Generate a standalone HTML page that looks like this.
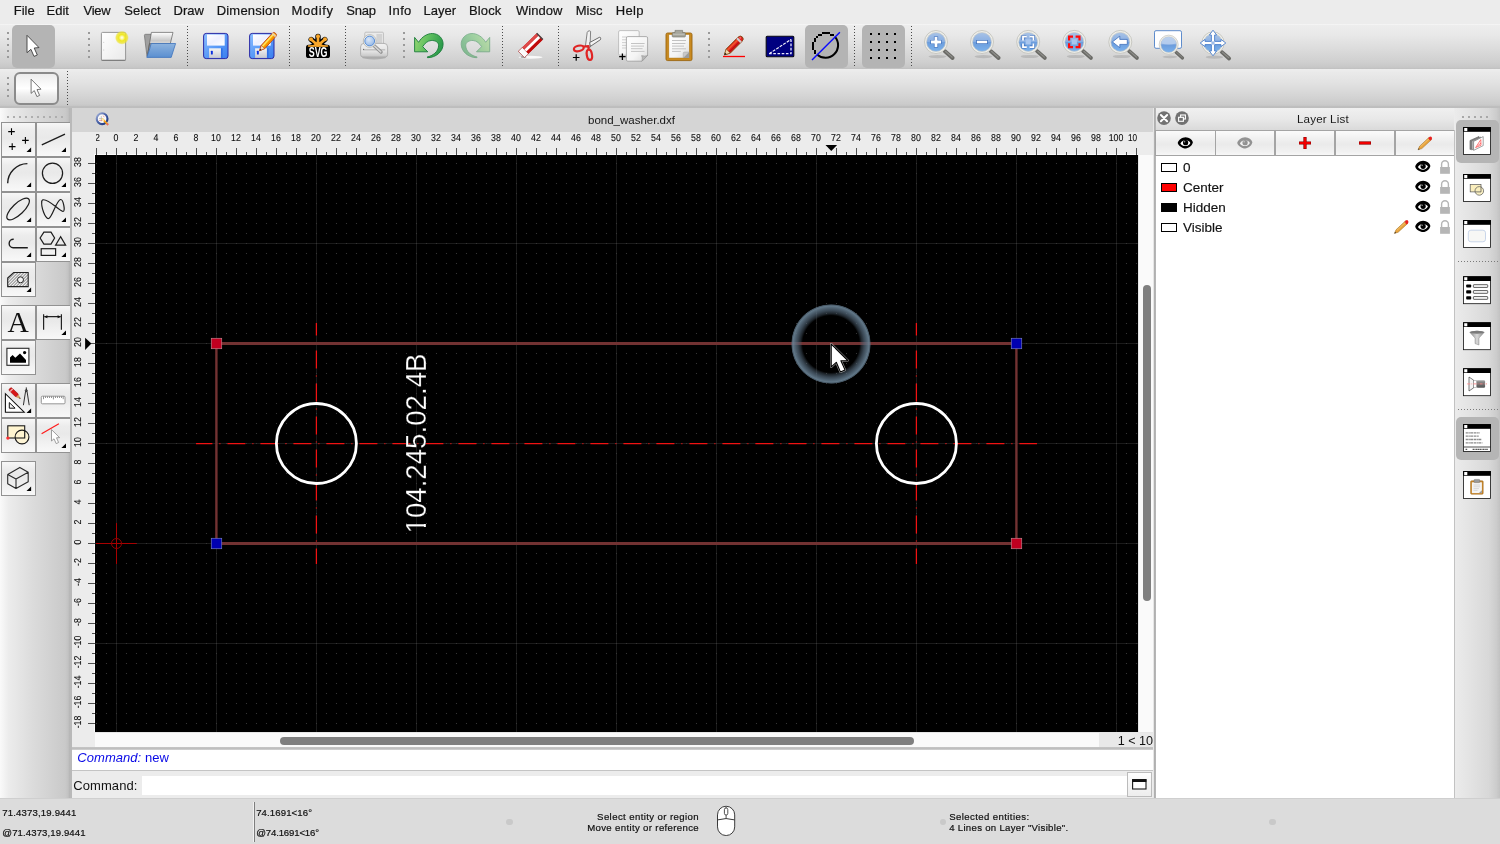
<!DOCTYPE html>
<html><head><meta charset="utf-8"><title>QCAD</title>
<style>
*{margin:0;padding:0;box-sizing:border-box}
html,body{width:1500px;height:844px;overflow:hidden}
body{position:relative;background:#ececec;font-family:"Liberation Sans",sans-serif;color:#1e1e1e;font-size:13px}
#root{position:absolute;left:0;top:0;width:1500px;height:844px;overflow:hidden;will-change:transform}
.abs{position:absolute}
svg{position:absolute;overflow:visible}
#menubar{position:absolute;left:0;top:0;width:1500px;height:24px;background:#ececec}
#menubar span{position:absolute;top:2px;font-size:13px;line-height:17px;color:#141414;white-space:nowrap;-webkit-text-stroke:0.2px #141414}
#tb1{position:absolute;left:0;top:24px;width:1500px;height:45px;background:linear-gradient(#f8f8f8 0,#ededed 3%,#e8e8e8 25%,#dcdcdc 55%,#cfcfcf 85%,#c7c7c7 96%,#c0c0c0 100%)}
#tb2{position:absolute;left:0;top:69px;width:1500px;height:39px;background:linear-gradient(#eeeeee 0,#eaeaea 8%,#e2e2e2 35%,#d6d6d6 65%,#cbcbcb 90%,#c6c6c6 94%,#bebebe 96%,#bdbdbd 100%)}
.sel{position:absolute;background:#b4b4b4;border-radius:5px}
.hsep{position:absolute;width:2px;background-image:linear-gradient(#9a9a9a 2px,transparent 2px);background-size:2px 6px}
.vsep{position:absolute;width:1px;background-image:linear-gradient(#4a4a4a 1px,transparent 1px);background-size:1px 3px}
/* rulers */
.rl{position:absolute;top:132px;width:40px;text-align:center;font-size:10px;line-height:12px;color:#0a0a0a;transform:scaleX(0.88) skewX(0.05deg);-webkit-text-stroke:0.1px #0a0a0a}
.vl{position:absolute;left:58.4px;width:40px;height:12px;margin-top:-6px;text-align:center;font-size:10px;line-height:12px;color:#0a0a0a;transform:rotate(-90deg) scaleX(0.88) skewX(0.05deg);transform-origin:50% 50%;-webkit-text-stroke:0.1px #0a0a0a}
</style></head>
<body>
<div id="root">
<div id="menubar">
<span style="left:13.7px;letter-spacing:0.0px">File</span><span style="left:46.6px;letter-spacing:-0.05px">Edit</span><span style="left:83.4px;letter-spacing:-0.2px">View</span><span style="left:124.2px;letter-spacing:0.05px">Select</span><span style="left:173.6px;letter-spacing:0.0px">Draw</span><span style="left:216.7px;letter-spacing:0.2px">Dimension</span><span style="left:291.5px;letter-spacing:0.65px">Modify</span><span style="left:346.3px;letter-spacing:-0.25px">Snap</span><span style="left:388.6px;letter-spacing:0.35px">Info</span><span style="left:423.6px;letter-spacing:0.0px">Layer</span><span style="left:468.9px;letter-spacing:0.15px">Block</span><span style="left:515.9px;letter-spacing:0.05px">Window</span><span style="left:575.7px;letter-spacing:0.0px">Misc</span><span style="left:615.8px;letter-spacing:0.3px">Help</span>
</div>
<div id="tb1"></div>
<div id="tb2"></div>
<!-- toolbar decorations -->
<div class="hsep" style="left:7px;top:32px;height:26px"></div>
<div class="hsep" style="left:88px;top:32px;height:26px"></div>
<div class="hsep" style="left:403px;top:32px;height:26px"></div>
<div class="hsep" style="left:708px;top:32px;height:26px"></div>
<div class="hsep" style="left:7px;top:77px;height:20px"></div>
<div class="vsep" style="left:187px;top:26px;height:40px"></div>
<div class="vsep" style="left:289px;top:26px;height:40px"></div>
<div class="vsep" style="left:345px;top:26px;height:40px"></div>
<div class="vsep" style="left:502px;top:26px;height:40px"></div>
<div class="vsep" style="left:558px;top:26px;height:40px"></div>
<div class="vsep" style="left:854px;top:26px;height:40px"></div>
<div class="vsep" style="left:911px;top:26px;height:40px"></div>
<div class="vsep" style="left:67px;top:71px;height:35px"></div>
<div class="sel" style="left:12px;top:25px;width:43px;height:43px"></div>
<div class="sel" style="left:805px;top:25px;width:43px;height:43px"></div>
<div class="sel" style="left:862px;top:25px;width:43px;height:43px"></div>
<div class="abs" style="left:14px;top:72px;width:45px;height:33px;border:2px solid #8b8b8b;border-radius:6px;background:linear-gradient(#ececec 0,#f6f6f6 25%,#ffffff 50%,#ebebeb 75%,#e0e0e0 100%)"></div>
<svg width="1500" height="86" viewBox="0 22 1500 86" style="left:0;top:22px">
<!-- arrows -->
<path d="M27 35.3 V52.7 L30.9 49.3 L34 56.4 L37.3 55 L34.2 48 L39 47.6 Z" fill="#fff" stroke="#3c3c3c" stroke-width="0.9" stroke-linejoin="round"/>
<path d="M31.1 79.2 V93.4 L34.3 90.6 L36.9 96.6 L39.6 95.4 L37 89.6 L41 89.2 Z" fill="#fff" stroke="#555" stroke-width="0.8" stroke-linejoin="round"/>
<!-- grid dots -->
<g fill="#000"><path d="M870 33h2v2h-2zM878 33h2v2h-2zM886 33h2v2h-2zM894 33h2v2h-2zM870 41h2v2h-2zM878 41h2v2h-2zM886 41h2v2h-2zM894 41h2v2h-2zM870 49h2v2h-2zM878 49h2v2h-2zM886 49h2v2h-2zM894 49h2v2h-2zM870 57h2v2h-2zM878 57h2v2h-2zM886 57h2v2h-2zM894 57h2v2h-2z"/></g>
<!-- circle with line -->
<path d="M834.8 36.6 A12.6 12.6 0 0 1 817 54.4" fill="none" stroke="#000" stroke-width="2"/>
<path d="M822 32h8v2h-8z M818 34h4v2h-4z M830 34h4v2h-4z M816 36h2v2h-2z M814 38h2v4h-2z M812 42h2v8h-2z M814 50h2v4h-2z" fill="#000" shape-rendering="crispEdges"/>
<path d="M812 59.9 L839.9 32.2" stroke="#0a0aff" stroke-width="1.4"/>
<defs>
<linearGradient id="gPage" x1="0" y1="0" x2="1" y2="1"><stop offset="0" stop-color="#ffffff"/><stop offset="1" stop-color="#e9e9e9"/></linearGradient>
<radialGradient id="gGlow"><stop offset="0" stop-color="#ffffff"/><stop offset="0.22" stop-color="#fbf7a0"/><stop offset="0.45" stop-color="#f0e824"/><stop offset="0.8" stop-color="#eee42a" stop-opacity="0.75"/><stop offset="1" stop-color="#e8e040" stop-opacity="0"/></radialGradient>
<linearGradient id="gFold" x1="0" y1="0" x2="0" y2="1"><stop offset="0" stop-color="#8db3de"/><stop offset="1" stop-color="#5b8fd0"/></linearGradient>
<linearGradient id="gPaper" x1="0" y1="0" x2="0" y2="1"><stop offset="0" stop-color="#ffffff"/><stop offset="0.35" stop-color="#c9c9c9"/><stop offset="0.6" stop-color="#e4e4e4"/><stop offset="1" stop-color="#bdbdbd"/></linearGradient>
<linearGradient id="gDisk" x1="0" y1="0" x2="1" y2="1"><stop offset="0" stop-color="#8fc0ff"/><stop offset="0.5" stop-color="#5b9bf8"/><stop offset="1" stop-color="#3a7eee"/></linearGradient>
<linearGradient id="gLabel" x1="0" y1="0" x2="1" y2="1"><stop offset="0" stop-color="#ffffff"/><stop offset="0.5" stop-color="#eef0ff"/><stop offset="1" stop-color="#ffffff"/></linearGradient>
<linearGradient id="gShut" x1="0" y1="0" x2="0" y2="1"><stop offset="0" stop-color="#f4f4f4"/><stop offset="1" stop-color="#c8c8d0"/></linearGradient>
<linearGradient id="gUndo" x1="0" y1="0" x2="1" y2="0.3"><stop offset="0" stop-color="#9ad872"/><stop offset="0.5" stop-color="#5fbf5f"/><stop offset="1" stop-color="#2e9c4c"/></linearGradient>
<linearGradient id="gPrn" x1="0" y1="0" x2="0" y2="1"><stop offset="0" stop-color="#f2f2f2"/><stop offset="0.6" stop-color="#e2e2e2"/><stop offset="1" stop-color="#c4c4c4"/></linearGradient>
<radialGradient id="gLensS" cx="0.4" cy="0.35" r="0.8"><stop offset="0" stop-color="#dce8f8"/><stop offset="0.6" stop-color="#a9c6ec"/><stop offset="1" stop-color="#7fa8e0"/></radialGradient>
</defs>
<!-- new -->
<rect x="101.4" y="32.4" width="24.2" height="28" rx="1.2" fill="url(#gPage)" stroke="#8c8c8c" stroke-width="0.9"/>
<path d="M101.5 60.3 H125.5" stroke="#6a6a6a" stroke-width="1.1" opacity="0.7"/>
<path d="M103.2 42.4 h1 M103.2 50 h1" stroke="#bbb" stroke-width="0.7"/>
<circle cx="121.9" cy="37.7" r="7" fill="url(#gGlow)"/>
<!-- open -->
<path d="M144.4 35.4 Q144.4 34.3 145.6 34.3 H151.4 L151.2 56.7 H147 Z" fill="#a0a0a0" stroke="#6e6e6e" stroke-width="0.7"/>
<path d="M151.4 32.4 H173 L170.3 43.6 H149.5 L147.4 55.6 Z" fill="url(#gPaper)" stroke="#5e5e5e" stroke-width="0.7" stroke-linejoin="round"/>
<path d="M151.2 43.5 H175.6 L171.2 57.4 H146.8 Q149.6 50 151.2 43.5 Z" fill="url(#gFold)" stroke="#3f74bd" stroke-width="0.8" stroke-linejoin="round"/>
<!-- save -->
<g id="floppy">
<rect x="203.6" y="33.4" width="24.4" height="25.2" rx="2.6" fill="url(#gDisk)" stroke="#2a2aa6" stroke-width="1"/>
<rect x="207" y="34.5" width="17.7" height="11.1" fill="url(#gLabel)"/>
<rect x="209.1" y="48.3" width="11.8" height="9.6" fill="url(#gShut)"/>
<rect x="221" y="48.3" width="1.6" height="9.6" fill="#2f6fe6"/>
<rect x="210.9" y="50.7" width="1.9" height="3.9" rx="0.6" fill="#0a2ee0"/>
</g>
<use href="#floppy" x="46"/>
<!-- pencil on save-as -->
<g transform="translate(259.6 50.7) rotate(-47.6)">
<path d="M0 0 L5 -2.4 H21.6 Q23.6 -2.4 23.6 0 Q23.6 2.4 21.6 2.4 H5 Z" fill="#ffb000" stroke="#b8360e" stroke-width="0.8" stroke-linejoin="round"/>
<path d="M5 -0.9 H21.4" stroke="#ffe36a" stroke-width="1.4"/>
<path d="M5 1.3 H21.4" stroke="#f58a00" stroke-width="1.4"/>
<path d="M0 0 L5 -2.3 V2.3 Z" fill="#f3e3c6" stroke="#b8360e" stroke-width="0.5"/>
<path d="M0 0 L1.9 -0.9 V0.9 Z" fill="#222"/>
<rect x="20.4" y="-2.3" width="2" height="4.6" fill="#e8d8c0" opacity="0.8"/>
</g>
<!-- SVG -->
<g>
<path d="M318 45.5 V36.5 M318 45.5 L311.2 39.5 M318 45.5 L324.8 39.5" stroke="#000" stroke-width="5.4" stroke-linecap="round" fill="none"/>
<path d="M307.6 46.4 Q313 45.8 318 41 Q323 45.8 328.4 46.4 Z" fill="#000" stroke="#000" stroke-width="2"/>
<rect x="306" y="44.8" width="24" height="13.3" rx="2.6" fill="#000"/>
<path d="M318 45.5 V36.5 M318 45.5 L311.2 39.5 M318 45.5 L324.8 39.5" stroke="#f9a72b" stroke-width="2.7" stroke-linecap="round" fill="none"/>
<circle cx="318" cy="36.2" r="2" fill="#f9a72b"/><circle cx="311" cy="39.3" r="2" fill="#f9a72b"/><circle cx="325" cy="39.3" r="2" fill="#f9a72b"/>
<path d="M308.6 46.2 Q313.4 45.6 318 42.3 Q322.6 45.6 327.4 46.2 Z" fill="#f9a72b"/>
<path d="M308.4 46 H327.6" stroke="#f9a72b" stroke-width="1.3" stroke-linecap="round"/>
<text x="318.1" y="57.3" font-family="Liberation Sans, sans-serif" font-weight="bold" font-size="14.2" text-anchor="middle" fill="#fff" textLength="18.8" lengthAdjust="spacingAndGlyphs">SVG</text>
</g>
<!-- print preview -->
<ellipse cx="374" cy="57.4" rx="12" ry="2" fill="#777" opacity="0.4"/>
<rect x="364.8" y="32.2" width="18.6" height="13" rx="1" fill="#eaeaea" stroke="#b4b4b4" stroke-width="0.8"/>
<rect x="376.4" y="34" width="5.6" height="9.4" fill="#d2d2d2"/>
<path d="M360.6 47 Q360.6 43.4 364 43.4 H384 Q387.6 43.4 387.6 47 V54.6 Q387.6 57 385.2 57 H363 Q360.6 57 360.6 54.6 Z" fill="url(#gPrn)" stroke="#a4a4a4" stroke-width="0.8"/>
<path d="M363 49.8 H385.2" stroke="#bcbcbc" stroke-width="1.3"/>
<circle cx="363.6" cy="49.4" r="0.6" fill="#666"/>
<path d="M374.4 46 L381 52" stroke="#8e8e8e" stroke-width="3.4" stroke-linecap="round"/>
<path d="M374.6 46.2 L380.8 51.8" stroke="#d4d4d4" stroke-width="1.6" stroke-linecap="round"/>
<circle cx="369.7" cy="41" r="6.4" fill="#f4f4f0" stroke="#a9a9a4" stroke-width="0.7"/>
<circle cx="369.7" cy="41" r="4.9" fill="url(#gLensS)" stroke="#4f86d2" stroke-width="0.9"/>
<!-- undo / redo -->
<path id="undo" d="M414.6 37.4 L418.6 42.3 C422 36.5 427.5 33.5 432.3 33.5 C438.8 33.6 443.2 38.6 443.1 44.2 C443 51.4 436.2 57.6 427.6 57.7 L427.1 57 C432.5 56 438.4 51.8 438.6 45.8 C438.7 42 435.2 40.3 431.2 40.5 C427.6 40.7 424.6 43.5 422.7 46.7 L427.8 51.8 L414.6 51.8 Z" fill="url(#gUndo)" stroke="#1a7c3a" stroke-width="0.9" stroke-linejoin="round"/>
<g transform="translate(904.3 0) scale(-1 1)" opacity="0.5"><use href="#undo"/></g>
<!-- eraser -->
<ellipse cx="530.6" cy="57.2" rx="12" ry="1.5" fill="#fff" opacity="0.85"/>
<ellipse cx="523.5" cy="57" rx="3" ry="1" fill="#666" opacity="0.6"/>
<g transform="translate(518.3 51.3) rotate(-44.4)">
<rect x="0" y="0" width="26.2" height="8.8" fill="#d01414"/>
<rect x="0" y="0" width="5.6" height="8.8" fill="#fbfbfb" stroke="#a03030" stroke-width="0.5"/>
<rect x="5.6" y="0" width="19.6" height="2.6" fill="#de4a4a"/>
<rect x="5.6" y="3" width="19.6" height="2.9" fill="#ffffff"/>
<rect x="5.6" y="6" width="19.6" height="2.8" fill="#c00a0a"/>
<rect x="25" y="0" width="1.4" height="8.8" fill="#4a4a4a"/>
</g>
<defs>
<linearGradient id="gDoc" x1="0" y1="0" x2="1" y2="1"><stop offset="0" stop-color="#ffffff"/><stop offset="0.6" stop-color="#f4f4f4"/><stop offset="1" stop-color="#d8d8d8"/></linearGradient>
<linearGradient id="gLens" x1="0" y1="0" x2="0" y2="1"><stop offset="0" stop-color="#a9c3e6"/><stop offset="0.48" stop-color="#88aee2"/><stop offset="0.5" stop-color="#6b9cdc"/><stop offset="1" stop-color="#7cb2ec"/></linearGradient>
<linearGradient id="gHandle" x1="0" y1="0" x2="1" y2="0"><stop offset="0" stop-color="#8a8a86"/><stop offset="0.5" stop-color="#5c5c5a"/><stop offset="1" stop-color="#767672"/></linearGradient>
<g id="lens">
<ellipse cx="1.5" cy="14.6" rx="9" ry="1.6" fill="#777" opacity="0.28"/>
<path d="M8.9 9.2 L16.6 16" stroke="#6a6a66" stroke-width="3.9" stroke-linecap="round"/>
<path d="M9.6 9.4 L16.2 15.2" stroke="#8e8e8a" stroke-width="1.2" stroke-linecap="round" stroke-dasharray="0.8 0.8"/>
<circle cx="0" cy="0" r="11.5" fill="#eeeee9" stroke="#b9b9b2" stroke-width="0.7"/>
<circle cx="0" cy="0" r="9.5" fill="url(#gLens)" stroke="#c9c9c2" stroke-width="0.6"/>
</g>
</defs>
<!-- scissors -->
<path d="M585.4 46.4 L587.2 32.4 Q587.8 30.8 589.4 30.8 L590.6 31.4 L590 47.4 Z" fill="#f2f2f2" stroke="#666" stroke-width="0.8" stroke-linejoin="round"/>
<path d="M589.6 42.6 L599.4 37.3 Q600.8 37.2 600.7 38.6 L600.5 39.6 L590.4 46.4 Z" fill="#f4f4f4" stroke="#4a4a4a" stroke-width="0.8" stroke-linejoin="round"/>
<g fill="none" stroke="#e02424" stroke-width="2.2">
<ellipse cx="578.8" cy="48.4" rx="5" ry="2.7" transform="rotate(-14 578.8 48.4)"/>
<ellipse cx="589.4" cy="54.8" rx="2.6" ry="5.2" transform="rotate(-9 589.4 54.8)"/>
<path d="M583.4 46.6 L588.4 46.2 L588.6 50" stroke-width="2.2" stroke-linejoin="round"/>
</g>
<path d="M572.9 57.5 h6.6 M576.2 54.2 v6.6" stroke="#000" stroke-width="1.2" fill="none"/>
<!-- copy -->
<rect x="618.6" y="30.6" width="20.6" height="24.6" rx="1.4" fill="url(#gDoc)" stroke="#b4b4b4" stroke-width="0.8"/>
<path d="M622 37 h5 M622 39.8 h5 M622 42.6 h5 M622 45.4 h5 M622 48 h5" stroke="#cfcfcf" stroke-width="1"/>
<path d="M627.8 36.6 H646.2 Q647.6 36.6 647.6 38 V55.4 L642 61.2 H627.8 Q626.4 61.2 626.4 59.8 V38 Q626.4 36.6 627.8 36.6 Z" fill="url(#gDoc)" stroke="#9a9a9a" stroke-width="0.8"/>
<path d="M642 61.2 Q642.8 57.4 641.6 55.6 Q644.6 56.6 647.6 55.4 Z" fill="#b8b8b8" stroke="#8c8c8c" stroke-width="0.5"/>
<path d="M631 43.5 h13.6 M631 46.1 h13 M631 48.7 h11.6 M631 51.4 h13.6" stroke="#c4c4c4" stroke-width="1"/>
<path d="M619.2 56.7 h6.4 M622.4 53.5 v6.4" stroke="#000" stroke-width="1.3" fill="none"/>
<!-- paste -->
<rect x="666" y="33" width="26" height="27.6" rx="1.6" fill="#c98a20" stroke="#9a6410" stroke-width="0.9"/>
<rect x="668.9" y="34.6" width="20.3" height="23.4" fill="url(#gDoc)" stroke="#a87418" stroke-width="0.4"/>
<path d="M672 40.5 h14 M672 43.5 h13.4 M672 46.1 h12 M672 48.8 h14 M672 51.4 h8.8" stroke="#c2c2c2" stroke-width="1"/>
<path d="M683.2 58 L689.2 52 V58 Z" fill="#9c9c9c"/><path d="M683.2 58 L683.2 53.4 Q683.2 52 684.6 52 H689.2 Z" fill="#c8c8c8" stroke="#999" stroke-width="0.4"/>
<path d="M675 30.4 H682.6 V32.6 H684.6 Q685.4 32.6 685.4 33.4 V36.2 Q685.4 37 684.6 37 H673 Q672.2 37 672.2 36.2 V33.4 Q672.2 32.6 673 32.6 H675 Z" fill="#a6a69c" stroke="#6e6e66" stroke-width="0.6"/>
<path d="M673 34.3 H684.6" stroke="#c8c8c0" stroke-width="0.8"/>
<!-- red pencil -->
<path d="M723 56.5 H745" stroke="#ff0000" stroke-width="1.3"/>
<g transform="translate(724.4 54.9) rotate(-45)">
<path d="M0 0 L5.4 -2.9 H22 Q25.4 -2.9 25.4 0 Q25.4 2.9 22 2.9 H5.4 Z" fill="#e22222" stroke="#7a4a12" stroke-width="0.8" stroke-linejoin="round"/>
<path d="M5.4 -1.2 H19.6" stroke="#f05a2a" stroke-width="1.5"/>
<path d="M5.4 1.4 H19.6" stroke="#c01010" stroke-width="1.5"/>
<path d="M0 0 L5.4 -2.8 V2.8 Z" fill="#f2d8ac" stroke="#7a4a12" stroke-width="0.5"/>
<path d="M0 0 L2.1 -1.1 V1.1 Z" fill="#111"/>
<rect x="19.6" y="-2.8" width="2.1" height="5.6" fill="#cfcfcf"/>
<circle cx="23.2" cy="-0.9" r="1" fill="#ff7a7a" opacity="0.8"/>
</g>
<!-- blue box -->
<rect x="766.2" y="36.2" width="27.6" height="20.6" rx="1" fill="#000080" stroke="#0a0a14" stroke-width="1.1"/>
<path d="M769.2 53.7 L791 39.4" stroke="#fff" stroke-width="1.1" stroke-dasharray="3 1.2" fill="none"/>
<path d="M791 39.4 V53.7 H769.2" stroke="#e8e8ff" stroke-width="1.3" stroke-dasharray="2.6 1.6" fill="none"/>
<!-- zoom icons -->
<use href="#lens" x="936" y="42"/>
<path d="M936 36.4 V47.6 M930.4 42 H941.6" stroke="#3e6fba" stroke-width="4.2" fill="none"/>
<path d="M936 37 V47 M931 42 H941" stroke="#fff" stroke-width="2.8" fill="none"/>
<use href="#lens" x="982" y="42"/>
<path d="M976.2 42 H987.8" stroke="#3e6fba" stroke-width="4" fill="none"/>
<path d="M976.9 42 H987.1" stroke="#fff" stroke-width="2.6" fill="none"/>
<use href="#lens" x="1028.2" y="41.9"/>
<rect x="1025.6" y="39.3" width="5.2" height="5.2" fill="#a9c6ee"/>
<g fill="none" stroke="#3e6fba" stroke-width="3"><path d="M1023 40 V36.7 H1026.4 M1030 36.7 H1033.4 V40 M1033.4 43.8 V47.1 H1030 M1026.4 47.1 H1023 V43.8"/></g>
<g fill="none" stroke="#fff" stroke-width="1.8"><path d="M1023 40.4 V36.7 H1026.8 M1029.6 36.7 H1033.4 V40.4 M1033.4 43.4 V47.1 H1029.6 M1026.8 47.1 H1023 V43.4"/></g>
<use href="#lens" x="1074.3" y="41.9"/>
<rect x="1071.7" y="39.3" width="5.2" height="5.2" fill="#a9c6ee"/>
<g fill="none" stroke="#ff0a0a" stroke-width="2.2"><path d="M1069.1 40.6 V36.7 H1073 M1075.6 36.7 H1079.5 V40.6 M1079.5 43.2 V47.1 H1075.6 M1073 47.1 H1069.1 V43.2"/></g>
<use href="#lens" x="1120.3" y="41.9"/>
<path d="M1112.4 41.9 L1119.8 36.1 V39.4 H1127.3 V44.4 H1119.8 V47.7 Z" fill="#fff" stroke="#3e6fba" stroke-width="0.8" stroke-linejoin="round"/>
<!-- zoom window -->
<rect x="1154.5" y="30.7" width="27" height="17.6" rx="1.5" fill="#fff" stroke="#5e8ccc" stroke-width="1"/>
<g transform="translate(1168.7 44.7) scale(0.83)"><use href="#lens"/><path d="M-9 -1.5 Q0 1.2 9 -1.5 Q7.5 -9.3 0 -9.4 Q-7.5 -9.3 -9 -1.5 Z" fill="#c0d4f0" opacity="0.75"/></g>
<!-- pan -->
<g transform="translate(1213 43) scale(0.97)"><use href="#lens"/></g>
<path d="M1213 30.2 L1216.6 35 H1214.6 V41.4 H1221 V39.4 L1225.8 43 L1221 46.6 V44.6 H1214.6 V51 H1216.6 L1213 55.8 L1209.4 51 H1211.4 V44.6 H1205 V46.6 L1200.2 43 L1205 39.4 V41.4 H1211.4 V35 H1209.4 Z" fill="#fff" stroke="#4d80cc" stroke-width="0.9" stroke-linejoin="round"/>
<rect x="1211.4" y="41.4" width="3.2" height="3.2" fill="#9dbce8"/>

</svg>

<!-- left tool panel -->
<div class="abs" id="leftpanel" style="left:0;top:108px;width:71px;height:690px;background:linear-gradient(90deg,#fafafa 0,#ececec 12%,#dcdcdc 45%,#c9c9c9 92%,#c2c2c2 96%,#b4b4b4 98.5%,#b0b0b0 100%)"></div>
<div class="abs" style="left:7px;top:116px;width:58px;height:2px;background-image:linear-gradient(90deg,#aeaeae 2px,transparent 2px);background-size:6px 2px"></div>
<style>
.tbtn{position:absolute;width:35px;height:35px;border:1px solid #929292;background:linear-gradient(#f7f7f7 0,#ececec 22%,#e9e9e9 45%,#f3f3f3 80%,#f8f8f8 100%)}
</style>
<div class="tbtn" style="left:1px;top:122px"></div><div class="tbtn" style="left:36px;top:122px"></div>
<div class="tbtn" style="left:1px;top:157px"></div><div class="tbtn" style="left:36px;top:157px"></div>
<div class="tbtn" style="left:1px;top:192px"></div><div class="tbtn" style="left:36px;top:192px"></div>
<div class="tbtn" style="left:1px;top:227px"></div><div class="tbtn" style="left:36px;top:227px"></div>
<div class="tbtn" style="left:1px;top:262px"></div>
<div class="tbtn" style="left:1px;top:305px"></div><div class="tbtn" style="left:36px;top:305px"></div>
<div class="tbtn" style="left:1px;top:340px"></div>
<div class="tbtn" style="left:1px;top:383px"></div><div class="tbtn" style="left:36px;top:383px"></div>
<div class="tbtn" style="left:1px;top:418px"></div><div class="tbtn" style="left:36px;top:418px"></div>
<div class="tbtn" style="left:1px;top:461px"></div>
<svg width="72" height="420" viewBox="0 108 72 420" style="left:0;top:108px">
<defs><path id="tri" d="M4.6 0 L4.6 4.5 L0 4.5 Z" fill="#000"/></defs>
<g fill="#000">
<use href="#tri" x="26.5" y="147.5"/><use href="#tri" x="61.4" y="147.5"/>
<use href="#tri" x="26.5" y="182.5"/><use href="#tri" x="61.4" y="182.5"/>
<use href="#tri" x="26.5" y="217.5"/><use href="#tri" x="61.4" y="217.5"/>
<use href="#tri" x="26.5" y="252.5"/><use href="#tri" x="61.4" y="252.5"/>
<use href="#tri" x="26.5" y="287.5"/>
<use href="#tri" x="61.4" y="330.5"/>
<use href="#tri" x="26.5" y="408.5"/>
<use href="#tri" x="61.4" y="443.5"/>
<use href="#tri" x="26.5" y="486.5"/>
</g>
<g fill="none" stroke="#1c1c1c" stroke-width="1.25" stroke-linecap="butt">
<!-- points -->
<path d="M8.2 131.6h6.6M11.5 128.3v6.6 M22.1 140.4h6.6M25.4 137.1v6.6 M8.9 146.6h6.6M12.2 143.3v6.6" stroke-width="1.1" stroke="#000"/>
<!-- line -->
<path d="M41.8 144.8 L65 134.1" stroke-width="1.3"/>
<!-- arc -->
<path d="M7.7 183.3 A19.8 19.8 0 0 1 27.4 163.6" stroke-width="1.4"/>
<!-- circle -->
<circle cx="52.5" cy="173.3" r="10.1"/>
<!-- ellipse -->
<ellipse cx="18.1" cy="209" rx="14.6" ry="5.6" transform="rotate(-43.5 18.1 209)"/>
<!-- spline -->
<path d="M41.8 201.2 C40.9 207.2 45.2 219.1 48.6 218.5 C52.1 217.9 56.3 200.4 60.6 199.5 C63.2 199.1 65.7 211.5 63.1 211.5 C59.7 211.5 47.8 197.8 42.7 199.9 C41.8 200.4 41.8 201.2 41.8 201.2 Z" stroke-width="1.2"/>
<!-- polyline hook -->
<path d="M13.7 239.2 A4.3 4.3 0 0 0 13.2 247.8 L27.8 247.8" stroke-width="1.4"/>
<!-- shapes -->
<path d="M40.1 238 L43.9 232.1 L51 232.1 L54.6 238 L51 244.1 L43.9 244.1 Z" stroke-width="1.2"/>
<path d="M60.6 236.7 L55.6 245.2 L65.6 245.2 Z" stroke-width="1.2"/>
<rect x="41.2" y="248.7" width="14.4" height="6.7" stroke-width="1.2"/>
</g>
<!-- hatch -->
<defs><clipPath id="hclip"><path d="M7.7 278 L13.7 272.5 L28.2 272.5 L28.2 286.6 L7.7 286.6 Z M23.5 279.8 A3 3 0 1 0 17.5 279.8 A3 3 0 1 0 23.5 279.8 Z" clip-rule="evenodd"/></clipPath></defs>
<g clip-path="url(#hclip)" stroke="#3a3a3a" stroke-width="0.65">
<path d="M-8.4 290 L11.6 270 M-5.4 290 L14.6 270 M-2.4 290 L17.6 270 M0.6 290 L20.6 270 M3.6 290 L23.6 270 M6.6 290 L26.6 270 M9.6 290 L29.6 270 M12.6 290 L32.6 270 M15.6 290 L35.6 270 M18.6 290 L38.6 270 M21.6 290 L41.6 270 M24.6 290 L44.6 270"/>
</g>
<path d="M7.7 278 L13.7 272.5 L28.2 272.5 L28.2 286.6 L7.7 286.6 Z" fill="none" stroke="#222" stroke-width="1.1"/>
<circle cx="20.5" cy="279.8" r="3" fill="#f2f2f2" stroke="#222" stroke-width="1"/>
<!-- A -->
<text x="18.2" y="331.7" font-family="Liberation Serif, serif" font-size="29.5" text-anchor="middle" fill="#111">A</text>
<!-- dimension -->
<g fill="none" stroke="#222" stroke-width="1.2"><path d="M43.6 314.2 V329.8 M61.4 314.2 V329.8 M44.5 316.7 H60.5" /></g>
<path d="M44 316.7 l3.4 -1.5 v3 Z M61 316.7 l-3.4 -1.5 v3 Z" fill="#111"/>
<!-- image -->
<rect x="6.9" y="348.3" width="22" height="17" fill="#fff" stroke="#2a2a2a" stroke-width="1.1"/>
<path d="M10 362.7 V357.4 L12.6 355 L15.3 357.7 L20 353.6 L26 360 V362.7 Z" fill="#000"/>
<circle cx="24.6" cy="352.6" r="1.6" fill="#000"/>
<!-- measuring / drafting -->
<path d="M5.4 393.7 V412.2 H24.2 Z" fill="#fff" stroke="#111" stroke-width="1.1"/>
<path d="M9.3 402.6 V408.2 H15.1 Z" fill="#f4f4f4" stroke="#111" stroke-width="1"/>
<g transform="translate(9.8 388.6) rotate(43.5)"><rect x="0" y="-1.9" width="10.5" height="3.8" rx="1.2" fill="#d81818" stroke="#901010" stroke-width="0.5"/><rect x="1.6" y="-1.9" width="1.3" height="3.8" fill="#f0b0b0"/><path d="M10.5 -1.9 L15 0 L10.5 1.9 Z" fill="#d9a060"/><path d="M13.3 -0.7 L15 0 L13.3 0.7 Z" fill="#333"/></g>
<g fill="none" stroke="#1a1a1a" stroke-width="0.9"><path d="M26.3 387.4 V391 M25.6 391.2 L23.4 405.2 M27 391.2 L29.2 405.2"/><circle cx="26.3" cy="390.6" r="1"/></g>
<!-- ruler -->
<rect x="41.3" y="396.2" width="23.7" height="7.6" rx="1" fill="#fff" stroke="#8c8c8c" stroke-width="0.9"/>
<path d="M43.5 396.4v2.8M45.5 396.4v1.6M47.5 396.4v1.6M49.5 396.4v1.6M51.5 396.4v1.6M53.4 396.4v3M55.5 396.4v1.6M57.5 396.4v1.6M59.5 396.4v1.6M61.5 396.4v1.6M63.2 396.4v2.8" stroke="#666" stroke-width="0.7" fill="none"/>
<!-- block -->
<rect x="7.8" y="425.8" width="16.9" height="12.2" fill="#fff5d0" stroke="#1a1a1a" stroke-width="1.1"/>
<circle cx="22" cy="437" r="6.9" fill="#fff5d0" fill-opacity="0.85" stroke="#1a1a1a" stroke-width="1.1"/>
<path d="M15.2 438 H24.7 V430.9" fill="none" stroke="#1a1a1a" stroke-width="1.1"/>
<circle cx="7.9" cy="438.1" r="1.7" fill="#ff3030"/>
<!-- select -->
<path d="M41.6 433.8 L58.9 423.7" stroke="#ff1a1a" stroke-width="1.2" fill="none"/>
<path d="M51.5 429.6 V441 L54 438.8 L56.2 443.6 L58.6 442.5 L56.5 437.8 L59.6 437.6 Z" fill="#fff" stroke="#888" stroke-width="0.8" stroke-linejoin="round"/>
<!-- cube -->
<g fill="none" stroke="#2a2a2a" stroke-width="1.1" stroke-linejoin="round"><path d="M7.7 474.4 L19.8 467.4 L28.2 472.3 L16 479.1 Z M7.7 474.4 V483.7 L16 488.5 L28.2 481.7 V472.3 M16 479.1 V488.5"/></g>
</svg>
<!-- document area -->
<div class="abs" style="left:70px;top:108px;width:2px;height:690px;background:#b9b9b9"></div>
<div class="abs" id="tabbar" style="left:72px;top:108px;width:1081px;height:24px;background:#d5d5d5"></div>
<div class="abs" style="left:588px;top:113px;font-size:11.5px;line-height:14px;color:#161616;white-space:nowrap" id="tabtitle">bond_washer.dxf</div>
<div class="abs" id="ruler-bg" style="left:72px;top:132px;width:1081px;height:617px;background:#ececec"></div>
<div class="abs" id="toplabels" style="left:96.4px;top:0;width:1041.6px;height:155px;overflow:hidden"><div class="abs" style="left:-97px;top:0"><span class="rl" style="left:76.5px">-2</span><span class="rl" style="left:96.5px">0</span><span class="rl" style="left:116.5px">2</span><span class="rl" style="left:136.5px">4</span><span class="rl" style="left:156.5px">6</span><span class="rl" style="left:176.5px">8</span><span class="rl" style="left:196.5px">10</span><span class="rl" style="left:216.5px">12</span><span class="rl" style="left:236.5px">14</span><span class="rl" style="left:256.5px">16</span><span class="rl" style="left:276.5px">18</span><span class="rl" style="left:296.5px">20</span><span class="rl" style="left:316.5px">22</span><span class="rl" style="left:336.5px">24</span><span class="rl" style="left:356.5px">26</span><span class="rl" style="left:376.5px">28</span><span class="rl" style="left:396.5px">30</span><span class="rl" style="left:416.5px">32</span><span class="rl" style="left:436.5px">34</span><span class="rl" style="left:456.5px">36</span><span class="rl" style="left:476.5px">38</span><span class="rl" style="left:496.5px">40</span><span class="rl" style="left:516.5px">42</span><span class="rl" style="left:536.5px">44</span><span class="rl" style="left:556.5px">46</span><span class="rl" style="left:576.5px">48</span><span class="rl" style="left:596.5px">50</span><span class="rl" style="left:616.5px">52</span><span class="rl" style="left:636.5px">54</span><span class="rl" style="left:656.5px">56</span><span class="rl" style="left:676.5px">58</span><span class="rl" style="left:696.5px">60</span><span class="rl" style="left:716.5px">62</span><span class="rl" style="left:736.5px">64</span><span class="rl" style="left:756.5px">66</span><span class="rl" style="left:776.5px">68</span><span class="rl" style="left:796.5px">70</span><span class="rl" style="left:816.5px">72</span><span class="rl" style="left:836.5px">74</span><span class="rl" style="left:856.5px">76</span><span class="rl" style="left:876.5px">78</span><span class="rl" style="left:896.5px">80</span><span class="rl" style="left:916.5px">82</span><span class="rl" style="left:936.5px">84</span><span class="rl" style="left:956.5px">86</span><span class="rl" style="left:976.5px">88</span><span class="rl" style="left:996.5px">90</span><span class="rl" style="left:1016.5px">92</span><span class="rl" style="left:1036.5px">94</span><span class="rl" style="left:1056.5px">96</span><span class="rl" style="left:1076.5px">98</span><span class="rl" style="left:1096.5px">100</span><span class="rl" id="lastlabel" style="left:1129px;width:auto;text-align:left;transform-origin:0 50%;transform:scaleX(0.82) skewX(0.05deg)">10</span></div></div>
<div class="abs" id="leftlabels" style="left:0;top:155px;width:96px;height:577px;overflow:hidden"><div class="abs" style="left:0;top:-155px"><span class="vl" style="top:162.4px">38</span><span class="vl" style="top:182.4px">36</span><span class="vl" style="top:202.4px">34</span><span class="vl" style="top:222.4px">32</span><span class="vl" style="top:242.4px">30</span><span class="vl" style="top:262.4px">28</span><span class="vl" style="top:282.4px">26</span><span class="vl" style="top:302.4px">24</span><span class="vl" style="top:322.4px">22</span><span class="vl" style="top:342.4px">20</span><span class="vl" style="top:362.4px">18</span><span class="vl" style="top:382.4px">16</span><span class="vl" style="top:402.4px">14</span><span class="vl" style="top:422.4px">12</span><span class="vl" style="top:442.4px">10</span><span class="vl" style="top:462.4px">8</span><span class="vl" style="top:482.4px">6</span><span class="vl" style="top:502.4px">4</span><span class="vl" style="top:522.4px">2</span><span class="vl" style="top:542.4px">0</span><span class="vl" style="top:562.4px">-2</span><span class="vl" style="top:582.4px">-4</span><span class="vl" style="top:602.4px">-6</span><span class="vl" style="top:622.4px">-8</span><span class="vl" style="top:642.4px">-10</span><span class="vl" style="top:662.4px">-12</span><span class="vl" style="top:682.4px">-14</span><span class="vl" style="top:702.4px">-16</span><span class="vl" style="top:722.4px">-18</span></div></div>
<svg width="20" height="20" viewBox="92 109 20 20" style="left:92px;top:109px">
<defs><linearGradient id="gQ" x1="0" y1="0" x2="1" y2="1"><stop offset="0" stop-color="#a9b7dc"/><stop offset="0.45" stop-color="#4a63a8"/><stop offset="1" stop-color="#16307a"/></linearGradient></defs>
<circle cx="102.1" cy="118.7" r="4.4" fill="#fafafa"/>
<path d="M99 118.4 h4 M101.3 116 v5.4" stroke="#999" stroke-width="0.5"/><path d="M99 120.4 h3 M103.2 115.6 l1 1.6" stroke="#e05050" stroke-width="0.5"/>
<circle cx="102.1" cy="118.7" r="5.4" fill="none" stroke="url(#gQ)" stroke-width="2.1"/>
<path d="M102.6 119.2 L107.4 124.2" stroke="#f6a21a" stroke-width="1.9" stroke-linecap="round"/>
<path d="M102.4 119 L103.6 120.2" stroke="#fff0b0" stroke-width="1.4" stroke-linecap="round"/>
<circle cx="107.5" cy="124.3" r="1.1" fill="#e86868"/>
</svg>
<div class="abs" style="left:94px;top:154px;width:1044px;height:1px;background:#fbfbfb"></div>
<div class="abs" style="left:94px;top:154px;width:1px;height:578px;background:#fbfbfb"></div>
<!-- ticks -->
<div class="abs" style="left:96px;top:148px;width:1042px;height:7px;background-image:linear-gradient(90deg,#505050 1px,transparent 1px);background-size:20px 7px"></div>
<div class="abs" style="left:106px;top:152px;width:1032px;height:3px;background-image:linear-gradient(90deg,#505050 1px,transparent 1px);background-size:20px 3px"></div>
<div class="abs" style="left:88px;top:163px;width:7px;height:569px;background-image:linear-gradient(180deg,#505050 1px,transparent 1px);background-size:7px 20px"></div>
<div class="abs" style="left:92px;top:173px;width:3px;height:559px;background-image:linear-gradient(180deg,#505050 1px,transparent 1px);background-size:3px 20px"></div>
<svg width="14" height="8" viewBox="825 144 14 8" style="left:825px;top:144px"><path d="M825.5 145 H837.1 L831.3 151.1 Z" fill="#000"/></svg>
<svg width="8" height="14" viewBox="84 337 8 14" style="left:84px;top:337px"><path d="M85.1 337.8 V349.9 L91.4 343.6 Z" fill="#000"/></svg>
<!-- canvas -->
<div class="abs" id="canvas" style="left:95px;top:155px;width:1043px;height:577px;background:#000;overflow:hidden">
<!-- major grid -->
<div class="abs" style="left:21px;top:0;width:1022px;height:577px;background-image:linear-gradient(90deg,#1b1b1b 1px,transparent 1px);background-size:100px 577px"></div>
<div class="abs" style="left:0;top:88px;width:1043px;height:489px;background-image:linear-gradient(180deg,#1b1b1b 1px,transparent 1px);background-size:1043px 100px"></div>
<div class="abs" style="left:1px;top:8px;width:1042px;height:569px;background-image:linear-gradient(90deg,#363636 1px,transparent 1px);background-size:10px 10px;-webkit-mask-image:linear-gradient(180deg,#000 1px,transparent 1px);-webkit-mask-size:10px 10px;mask-image:linear-gradient(180deg,#000 1px,transparent 1px);mask-size:10px 10px"></div>
<svg width="1043" height="577" viewBox="95 155 1043 577" style="left:0;top:0">
<defs>
<radialGradient id="halo" cx="0.5" cy="0.5" r="0.5">
<stop offset="0" stop-color="#4a5c6c" stop-opacity="0"/>
<stop offset="0.71" stop-color="#4a5c6c" stop-opacity="0"/>
<stop offset="0.765" stop-color="#4c5e6e" stop-opacity="0.42"/>
<stop offset="0.83" stop-color="#54687a" stop-opacity="0.68"/>
<stop offset="0.90" stop-color="#5e7486" stop-opacity="0.85"/>
<stop offset="0.95" stop-color="#6a8294" stop-opacity="0.92"/>
<stop offset="0.982" stop-color="#5c7284" stop-opacity="0.7"/>
<stop offset="1" stop-color="#506476" stop-opacity="0"/>
</radialGradient>
</defs>
<!-- center lines -->
<g stroke="#f01212" stroke-width="1.25" fill="none" stroke-dasharray="18 7 1 7">
<line x1="196" y1="443.5" x2="1037" y2="443.5" stroke-dashoffset="1.6"/>
<line x1="316.4" y1="323" x2="316.4" y2="564" stroke-dashoffset="5.5"/>
<line x1="916.4" y1="323" x2="916.4" y2="564" stroke-dashoffset="5.5"/>
</g>
<!-- selected rectangle -->
<g stroke="#723232" fill="none">
<line x1="216" y1="343.5" x2="1016" y2="343.5" stroke-width="3"/>
<line x1="216" y1="543.5" x2="1016" y2="543.5" stroke-width="3"/>
<line x1="216.4" y1="343" x2="216.4" y2="544" stroke-width="2.4"/>
<line x1="1016.4" y1="343" x2="1016.4" y2="544" stroke-width="2.4"/>
</g>
<!-- circles -->
<circle cx="316.4" cy="443.5" r="40" fill="none" stroke="#fff" stroke-width="2.8"/>
<circle cx="916.4" cy="443.5" r="40" fill="none" stroke="#fff" stroke-width="2.8"/>
<!-- text -->
<text transform="translate(426.2,533.5) rotate(-90)" font-family="Liberation Sans, sans-serif" font-size="30" fill="#fff" stroke="#000" stroke-width="0.3" textLength="180" lengthAdjust="spacingAndGlyphs">104.245.02.4B</text>
<path d="M422.4 518.4 H426.8 V523.9 H422.4 Z M422.4 526.9 H426.8 V532.2 H422.4 Z" fill="#000"/>
<rect x="426" y="523" width="1" height="1" fill="#363636"/>
<!-- handles -->
<rect x="211.25" y="338.25" width="10.5" height="10.5" fill="#c00020" stroke="#c8909c" stroke-width="0.6"/>
<rect x="1011.25" y="538.25" width="10.5" height="10.5" fill="#c00020" stroke="#c8909c" stroke-width="0.6"/>
<rect x="1011.25" y="338.25" width="10.5" height="10.5" fill="#0000b0" stroke="#8088c8" stroke-width="0.6"/>
<rect x="211.25" y="538.25" width="10.5" height="10.5" fill="#0000b0" stroke="#8088c8" stroke-width="0.6"/>
<!-- origin cross -->
<g stroke="#a80000" stroke-width="1" fill="none"><line x1="96" y1="543.5" x2="136.5" y2="543.5"/><line x1="116.5" y1="523" x2="116.5" y2="564"/><circle cx="116.5" cy="543.5" r="5" stroke="#900000"/></g>
<!-- halo + cursor -->
<circle cx="831" cy="344" r="40" fill="url(#halo)"/>
<g transform="translate(831.2,344.1)">
<path d="M0 0 L0 22.8 L5.1 18.2 L9.2 27.8 L13.8 25.8 L9.7 16.6 L16.6 16.4 Z" fill="#fff" stroke="#fff" stroke-width="2.2" stroke-linejoin="round" opacity="0.6"/>
<path d="M0 0 L0 22.8 L5.1 18.2 L9.2 27.8 L13.8 25.8 L9.7 16.6 L16.6 16.4 Z" fill="#fff" stroke="#000" stroke-width="1.1" stroke-linejoin="round"/>
</g>

</svg>
</div>
<!-- scrollbars -->
<div class="abs" style="left:1138px;top:155px;width:15px;height:577px;background:#fafafa;border-left:1px solid #e6e6e6"></div>
<div class="abs" style="left:1143px;top:285px;width:8px;height:316px;border-radius:4px;background:#7f7f7f"></div>
<div class="abs" style="left:95px;top:732px;width:1058px;height:17px;background:#fafafa;border-top:1px solid #e6e6e6"></div>
<div class="abs" style="left:280px;top:737px;width:634px;height:8px;border-radius:4px;background:#7f7f7f"></div>
<div class="abs" style="left:1099px;top:733px;width:54px;height:15px;background:#e9e9e9"></div>
<div class="abs" style="left:1053px;width:100px;text-align:right;top:733.8px;font-size:12.6px;line-height:15px;color:#111;white-space:nowrap">1 &lt; 10</div>
<!-- layer list panel -->
<div class="abs" style="left:1153px;top:108px;width:3px;height:690px;background:linear-gradient(90deg,#e6e6e6 0,#e6e6e6 33%,#aeaeae 34%,#b8b8b8 100%)"></div>
<div class="abs" style="left:1156px;top:108px;width:298px;height:22px;background:linear-gradient(#f0f0f0 0,#e8e8e8 50%,#dadada 100%)"></div>
<div class="abs" style="left:1297px;top:111px;font-size:11.6px;line-height:15px;color:#1a1a1a;white-space:nowrap;letter-spacing:0.15px" id="lltitle">Layer List</div>
<svg width="40" height="22" viewBox="1156 108 40 22" style="left:1156px;top:108px">
<circle cx="1164" cy="118.1" r="6.8" fill="#727272"/><path d="M1160.9 115 L1167.1 121.2 M1167.1 115 L1160.9 121.2" stroke="#fff" stroke-width="2" stroke-linecap="round"/>
<circle cx="1182" cy="118.1" r="6.8" fill="#727272"/>
<rect x="1180.6" y="115" width="4.8" height="4" fill="none" stroke="#fff" stroke-width="1.1"/><rect x="1178.6" y="117.3" width="4.8" height="4" fill="#727272" stroke="#fff" stroke-width="1.1"/>
</svg>
<style>
.lbtn{position:absolute;top:130px;height:26px;border:1px solid #a8a8a8;background:linear-gradient(#fafafa 0,#f0f0f0 30%,#e9e9e9 55%,#f1f1f1 85%,#f6f6f6 100%)}
.lbtn2{position:absolute;top:130.8px;height:24.4px;background:linear-gradient(#fbfbfb 0,#f1f1f1 30%,#eaeaea 55%,#f1f1f1 85%,#f7f7f7 100%)}
.lrow{position:absolute;left:1183px;font-size:13.5px;line-height:18px;color:#111;white-space:nowrap;-webkit-text-stroke:0.15px #111;margin-top:0.5px}
.sw{position:absolute;left:1161px;width:16px;height:9px;border:1px solid #000}
</style>
<div class="abs" style="left:1155px;top:129.6px;width:300px;height:26.8px;background:#a4a4a4"></div>
<div class="lbtn2" style="left:1156.2px;width:58.4px"></div>
<div class="lbtn2" style="left:1216.0px;width:58.4px"></div>
<div class="lbtn2" style="left:1275.8px;width:58.5px"></div>
<div class="lbtn2" style="left:1335.7px;width:58.5px"></div>
<div class="lbtn2" style="left:1395.6px;width:58.4px"></div>
<div class="abs" style="left:1156px;top:156px;width:298px;height:642px;background:#fff"></div>
<div class="abs" style="left:1454px;top:130px;width:1px;height:668px;background:#c2c2c2"></div>
<div class="sw" style="top:163px;background:#fff"></div><div class="lrow" style="top:158px">0</div>
<div class="sw" style="top:183px;background:#f00"></div><div class="lrow" style="top:178px">Center</div>
<div class="sw" style="top:203px;background:#000"></div><div class="lrow" style="top:198px">Hidden</div>
<div class="sw" style="top:223px;background:#fff"></div><div class="lrow" style="top:218px">Visible</div>
<svg width="300" height="130" viewBox="1155 130 300 130" style="left:1155px;top:130px">
<defs>
<g id="eye">
<path d="M-7.6 0.2 C-6.6 -3.4 -3.4 -5.6 0.3 -5.7 C4 -5.6 6.8 -3.5 7.6 -0.6 C6.8 3 3.6 5.4 0.4 5.5 C-1.2 5.6 -1.9 5.1 -2.9 4.8 C-5.2 4 -7 2.3 -7.6 0.2 Z"/>
<path d="M-4.9 0.5 C-3.8 -1.6 -1.8 -2.6 0.2 -2.6 C2.4 -2.6 4.2 -1.6 5.1 0 C4.2 1.9 2.3 3.2 0.2 3.2 C-1.9 3.2 -3.8 2.2 -4.9 0.5 Z" fill="#fff"/>
<circle cx="0.3" cy="-0.2" r="2.6"/>
<circle cx="-0.7" cy="-1.2" r="0.75" fill="#999"/>
</g>
<g id="lock"><rect x="-4.9" y="0.6" width="9.8" height="6.8" fill="#b6b6b6"/><path d="M-3.4 1 V-2.2 A3.4 3.5 0 0 1 3.4 -2.2 V1" fill="none" stroke="#b6b6b6" stroke-width="1.4"/></g>
<g id="pencil"><path d="M0 0 L1.6 -3.6 L11.2 -12.6 L13.6 -10.2 L3.8 -1.2 Z" fill="#e8a33c" stroke="#9a6a1e" stroke-width="0.5"/><path d="M10 -11.5 L11.5 -12.9 Q12.8 -13.8 13.6 -12.7 Q14.6 -11.5 13.6 -10.2 L12.3 -9 Z" fill="#e82020"/><path d="M0 0 L0.7 -1.6 L1.7 -0.5 Z" fill="#333"/><path d="M2.4 -3 L11 -11" stroke="#f6cf80" stroke-width="0.7" fill="none"/></g>
</defs>
<use href="#eye" x="1185.3" y="142.9" fill="#000"/>
<g opacity="0.38"><use href="#eye" x="1244.8" y="142.9" fill="#000"/></g>
<path d="M1305 137 V149 M1299 143 H1311" stroke="#8a0000" stroke-width="3.2" fill="none"/>
<path d="M1305 137.5 V148.5 M1299.5 143 H1310.5" stroke="#f00000" stroke-width="2.1" fill="none"/>
<path d="M1359 143 H1371" stroke="#8a0000" stroke-width="3.2" fill="none"/>
<path d="M1359.5 143 H1370.5" stroke="#f00000" stroke-width="2.1" fill="none"/>
<use href="#pencil" x="1418" y="149.8"/>
<use href="#eye" x="1422.8" y="166.5"/><use href="#eye" x="1422.8" y="186.5"/><use href="#eye" x="1422.8" y="206.5"/><use href="#eye" x="1422.8" y="226.5"/>
<use href="#lock" x="1445" y="166.4"/><use href="#lock" x="1445" y="186.4"/><use href="#lock" x="1445" y="206.4"/><use href="#lock" x="1445" y="226.4"/>
<use href="#pencil" x="1394.4" y="233.4"/>
</svg>
<!-- right toolbar -->
<div class="abs" style="left:1455px;top:108px;width:45px;height:690px;background:linear-gradient(90deg,#ebebeb 0,#e4e4e4 30%,#d8d8d8 75%,#cccccc 92%,#c2c2c2 100%)"></div>
<div class="abs" style="left:1462px;top:116px;width:26px;height:2px;background-image:linear-gradient(90deg,#a8a8a8 2px,transparent 2px);background-size:6px 2px"></div>
<div class="abs" style="left:1456px;top:120px;width:43px;height:43px;border-radius:5px;background:#b5b5b5"></div>
<div class="abs" style="left:1456px;top:417px;width:43px;height:43px;border-radius:5px;background:#b5b5b5"></div>
<div class="abs" style="left:1458px;top:261px;width:42px;height:1px;background-image:linear-gradient(90deg,#7a7a7a 1px,transparent 1px);background-size:3px 1px"></div>
<div class="abs" style="left:1458px;top:409px;width:42px;height:1px;background-image:linear-gradient(90deg,#7a7a7a 1px,transparent 1px);background-size:3px 1px"></div>
<svg width="45" height="420" viewBox="1455 108 45 420" style="left:1455px;top:108px">
<defs>
<g id="wfr"><rect x="1463.5" y="0.5" width="27" height="27" fill="#fff" stroke="#111" stroke-width="0.8"/><rect x="1463.1" y="0.1" width="27.8" height="4.7" fill="#000"/><rect x="1464.2" y="1" width="3.1" height="3.1" fill="#fff"/></g>
</defs>
<use href="#wfr" y="127"/><use href="#wfr" y="174"/><use href="#wfr" y="220"/><use href="#wfr" y="276.2"/><use href="#wfr" y="322.2"/><use href="#wfr" y="368.2"/><use href="#wfr" y="424"/><use href="#wfr" y="471"/>
<!-- 1 layers -->
<g stroke-width="0.6" stroke-linejoin="round">
<path d="M1470 140.5 L1479 136.5 V145.5 L1470 149.5 Z" fill="#8a8a8a" stroke="#555"/>
<path d="M1471.6 141 L1480.6 137 V146 L1471.6 150 Z" fill="#b5b5b5" stroke="#666"/>
<path d="M1473.6 141.4 L1483.2 136.6 V145.6 L1473.6 150.4 Z" fill="#fff" stroke="#666"/>
<path d="M1475.6 147.6 L1480.8 139.6 L1481 145.2 Z M1477.4 146 L1481 143" fill="none" stroke="#ff4040" stroke-width="0.7"/>
</g>
<!-- 2 block -->
<rect x="1470.2" y="184.5" width="10.8" height="7.4" fill="#faeebc" stroke="#555" stroke-width="0.7"/>
<circle cx="1479.3" cy="190.9" r="4.3" fill="#faeebc" fill-opacity="0.9" stroke="#555" stroke-width="0.7"/>
<path d="M1475.2 191.9 H1481 V186.8" fill="none" stroke="#555" stroke-width="0.7"/>
<!-- 3 rounded rect -->
<rect x="1468.3" y="230.2" width="17.2" height="11.6" rx="2.6" fill="#f7f7f5" stroke="#c3d1e8" stroke-width="0.9"/>
<!-- 4 list -->
<g fill="#000"><rect x="1466.2" y="284.4" width="5" height="3.2" rx="0.8"/><rect x="1466.2" y="290.3" width="5" height="3.2" rx="0.8"/><rect x="1466.2" y="296.3" width="5" height="3.2" rx="0.8"/></g>
<g fill="#fff" stroke="#333" stroke-width="0.8"><rect x="1473.4" y="284.7" width="14.3" height="2.7" rx="0.5"/><rect x="1473.4" y="290.6" width="14.3" height="2.7" rx="0.5"/><rect x="1473.4" y="296.6" width="14.3" height="2.7" rx="0.5"/></g>
<!-- 5 funnel -->
<defs><linearGradient id="fg" x1="0" x2="1"><stop offset="0" stop-color="#8c8c8c"/><stop offset="0.5" stop-color="#d8d8d8"/><stop offset="1" stop-color="#8a8a8a"/></linearGradient></defs>
<path d="M1469.7 332.3 Q1477 329.8 1484.3 332.3 L1479 338 V345 L1475 343.6 V338 Z" fill="url(#fg)" stroke="#777" stroke-width="0.4"/>
<ellipse cx="1477" cy="332.2" rx="7.1" ry="1.5" fill="#7a7a7a"/>
<!-- 6 screw -->
<defs><linearGradient id="sg" x1="0" y1="0" x2="0" y2="1"><stop offset="0" stop-color="#aaa"/><stop offset="0.4" stop-color="#777"/><stop offset="1" stop-color="#555"/></linearGradient></defs>
<path d="M1469 377 L1473.7 380.2 V387.8 L1469 391 Z" fill="#f4f4f4" stroke="#444" stroke-width="0.7"/>
<rect x="1473.7" y="380.2" width="3" height="7.6" fill="#fff" stroke="#777" stroke-width="0.4"/>
<rect x="1476.7" y="380.2" width="8.4" height="7.6" rx="1.2" fill="url(#sg)"/>
<path d="M1467.2 383.9 H1487" stroke="#ff8a8a" stroke-width="0.9" stroke-dasharray="3 1.2 0.8 1.2" fill="none"/>
<!-- 7 command -->
<g stroke="#8a8a8a" stroke-width="1.3" fill="none" stroke-dasharray="2.2 0.5 1.4 0.4 3 0.6">
<path d="M1465.7 432.8 H1479.6"/><path d="M1465.7 436.1 H1479"/><path d="M1465.7 439.5 H1481.4"/><path d="M1465.7 442.8 H1482.4"/></g>
<path d="M1464 447 H1490.6" stroke="#222" stroke-width="0.8"/>
<path d="M1465.6 449.4 H1467.6 M1472.6 449.4 H1488" stroke="#555" stroke-width="1.4" stroke-dasharray="1.6 0.4 1 0.4"/>
<!-- 8 clipboard -->
<rect x="1470.6" y="480.8" width="12.6" height="13.4" rx="1" fill="#c8882e" stroke="#9a6418" stroke-width="0.5"/>
<rect x="1471.9" y="482.3" width="10" height="10.8" fill="#f4f4f4"/>
<path d="M1473.5 485 h6.6 M1473.5 486.8 h6.6 M1473.5 488.6 h5.4 M1473.5 490.4 h4" stroke="#c4c4c4" stroke-width="0.6"/>
<path d="M1479 493.1 L1481.9 490.2 V493.1 Z" fill="#999"/>
<rect x="1474" y="479.4" width="5.8" height="3.2" rx="0.8" fill="#9a9a9a" stroke="#666" stroke-width="0.4"/>
</svg>
<!-- command area -->
<div class="abs" style="left:72px;top:747px;width:1081px;height:51px;background:#ececec"></div>
<div class="abs" style="left:72px;top:747px;width:1081px;height:3px;background:linear-gradient(#c6c6c6,#bdbdbd 60%,#d8d8d8)"></div>
<div class="abs" style="left:72px;top:750px;width:1081px;height:21px;background:#fff;border-bottom:1px solid #c4c4c4"></div>
<div class="abs" style="left:77.3px;top:750px;font-size:13px;line-height:16px;color:#0a0ae6;white-space:nowrap;letter-spacing:0.05px"><i>Command:</i> new</div>
<div class="abs" style="left:142px;top:775.5px;width:985px;height:19px;background:#fff"></div>
<div class="abs" style="left:73.2px;top:777.6px;font-size:13px;line-height:16px;color:#111;white-space:nowrap;letter-spacing:0.1px">Command:</div>
<div class="abs" style="left:1127px;top:772px;width:25px;height:25px;background:linear-gradient(#fdfdfd,#ededed);border:1px solid #bbb"></div>
<svg width="16" height="12" viewBox="0 0 16 12" style="left:1132px;top:779px"><rect x="0.6" y="0.6" width="13.4" height="9.4" fill="#fff" stroke="#1a1a1a" stroke-width="1.1"/><rect x="0.2" y="0.2" width="14.2" height="2.8" fill="#111"/></svg>
<!-- status bar -->
<div class="abs" id="status" style="left:0;top:798px;width:1500px;height:46px;background:#dcdcdc;border-top:1px solid #cfcfcf"></div>
<style>.st{position:absolute;font-size:9.6px;line-height:12px;color:#101010;white-space:nowrap;-webkit-text-stroke:0.2px #101010}</style>
<div class="st" style="left:2.3px;top:806.5px;letter-spacing:0.15px">71.4373,19.9441</div>
<div class="st" style="left:2.3px;top:826.5px;letter-spacing:0.1px">@71.4373,19.9441</div>
<div class="abs" style="left:253px;top:802px;width:1px;height:40px;background:#f2f2f2"></div>
<div class="abs" style="left:254px;top:802px;width:1px;height:40px;background:#7e7e7e"></div>
<div class="st" style="left:256.2px;top:806.5px;letter-spacing:0.1px">74.1691&lt;16°</div>
<div class="st" style="left:256.2px;top:826.5px;letter-spacing:-0.15px">@74.1691&lt;16°</div>
<div class="abs" style="left:506.3px;top:818.5px;width:6.4px;height:6.4px;border-radius:50%;background:#c9c9c9"></div>
<div class="abs" style="left:940.1px;top:818.5px;width:6.4px;height:6.4px;border-radius:50%;background:#c9c9c9"></div>
<div class="abs" style="left:1269.3px;top:818.5px;width:6.4px;height:6.4px;border-radius:50%;background:#c9c9c9"></div>
<div class="st" style="left:398.7px;width:300px;text-align:right;top:810.8px;letter-spacing:0.4px;margin-left:0.4px">Select entity or region</div>
<div class="st" style="left:398.7px;width:300px;text-align:right;top:821.8px;letter-spacing:0.35px;margin-left:0.35px">Move entity or reference</div>
<div class="st" style="left:949.2px;top:810.8px;letter-spacing:0.4px">Selected entities:</div>
<div class="st" style="left:949.2px;top:821.8px;letter-spacing:0.3px">4 Lines on Layer "Visible".</div>
<svg width="20" height="32" viewBox="716 805 20 32" style="left:716px;top:805px">
<rect x="717.5" y="806.3" width="17.2" height="29.2" rx="8.4" ry="8.6" fill="#fff" stroke="#3a3a3a" stroke-width="1"/>
<path d="M717.6 819.9 Q726 817.2 734.6 819.9" fill="none" stroke="#3a3a3a" stroke-width="1"/>
<rect x="724.4" y="808" width="3.4" height="7" rx="1.6" fill="#fff" stroke="#3a3a3a" stroke-width="0.9"/>
<path d="M726.1 806.5 V808 M726.1 815 V818.6" stroke="#3a3a3a" stroke-width="0.9"/>
</svg>
</div>
</body></html>
